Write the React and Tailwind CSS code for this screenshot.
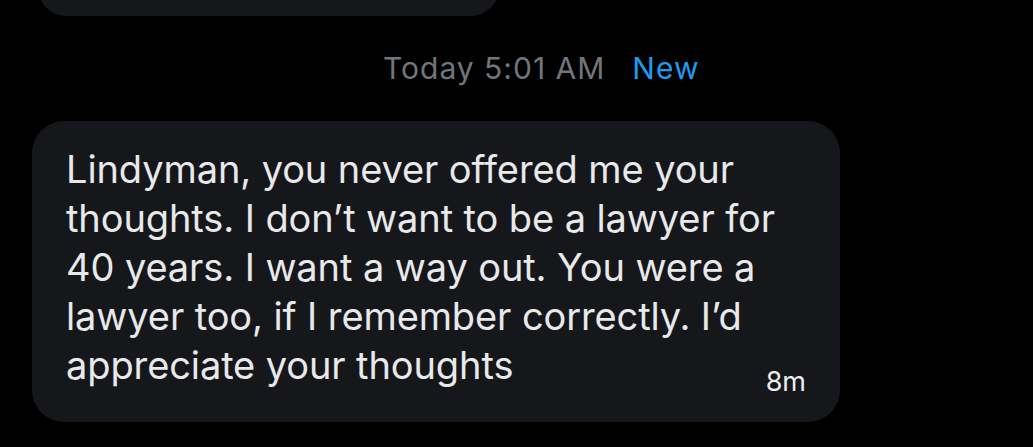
import React from "react";

export default function App() {
  return (
    <div
      className="w-[1033px] h-[447px] overflow-hidden bg-black"
      style={{ fontFamily: "Inter, Roboto, 'Liberation Sans', sans-serif" }}
    >
      {/* previous message, cut off at the top */}
      <div className="ml-[37px] mt-[-44px] h-[60px] w-[463px] rounded-[30px] bg-[#16171a]" />

      <div className="ml-[383px] mt-[34px] flex items-baseline gap-[27px] text-[30px] leading-[36px] tracking-[1px]">
        <span className="text-[#71767b]">Today 5:01 AM</span>
        <span className="text-[#1d9bf0]">New</span>
      </div>

      <div className="ml-[32px] mt-[35px] w-[808px] h-[301px] rounded-[32px] bg-[#16171a] pl-[34px] pr-[32px] pt-[24px] relative">
        <p className="text-[38px] leading-[49px] tracking-[-0.1px] text-[#e7e9ea]">
          Lindyman, you never offered me your
          <br />
          thoughts. I don’t want to be a lawyer for
          <br />
          40 years. I want a way out. You were a
          <br />
          lawyer too, if I remember correctly. I’d
          <br />
          appreciate your thoughts
        </p>
        <span className="absolute right-[34px] bottom-[25px] text-[27px] leading-[30px] text-[#eceeef]">
          8m
        </span>
      </div>
    </div>
  );
}
